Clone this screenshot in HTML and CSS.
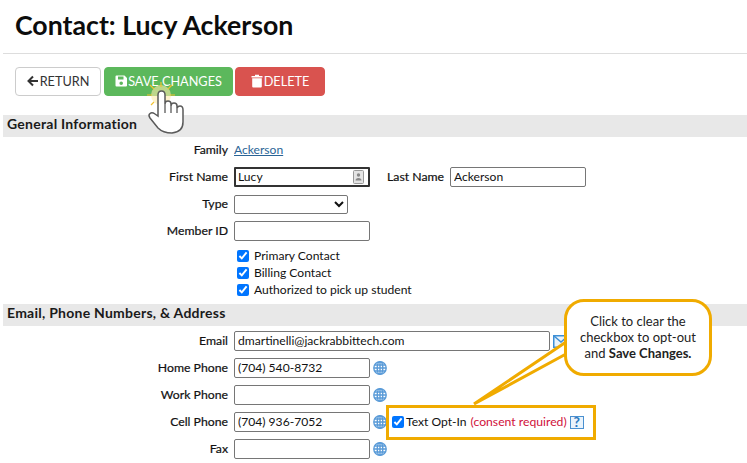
FILE: index.html
```html
<!DOCTYPE html>
<html lang="en">
<head>
<meta charset="utf-8">
<title>Contact: Lucy Ackerson</title>
<link rel="stylesheet" href="styles.css">
</head>
<body>
<div class="page">
  <h1 class="title">Contact: Lucy Ackerson</h1>
  <div class="actions">
    <button class="btn btn-return"><svg class="ico" viewBox="0 0 12 12"><path d="M11 6H2M6 1.5 1.5 6 6 10.5" fill="none" stroke="#333" stroke-width="2"/></svg>RETURN</button>
    <button class="btn btn-save"><svg class="ico" viewBox="0 0 12 12"><path fill-rule="evenodd" d="M1.5 0.500H9.500L12 3V10.500A1 1 0 0 1 11 11.500H1.500A1 1 0 0 1 .5 10.500V1.500A1 1 0 0 1 1.500 .5ZM3 1.500V4.500H8.500V1.500ZM6.200 6.500A1.800 1.800 0 1 0 6.200 10.100 1.800 1.800 0 1 0 6.200 6.500Z" fill="#fff"/></svg>SAVE CHANGES</button>
    <button class="btn btn-delete"><svg class="ico ico-trash" viewBox="0 0 12 14"><path d="M0.500 2H4V.8H8V2H11.500V3.400H.5ZM1.200 4.200H10.800V12.600A1 1 0 0 1 9.800 13.600H2.200A1 1 0 0 1 1.200 12.600Z" fill="#fff"/></svg>DELETE</button>
  </div>

  <h2 class="section">General Information</h2>
  <div class="rows">
    <div class="row"><span class="label">Family</span><a class="link" href="#">Ackerson</a></div>
    <div class="row">
      <span class="label">First Name</span>
      <span class="focus-wrap"><input class="field field-focus" value="Lucy"><svg class="contact-ico" viewBox="0 0 11 14"><rect x=".5" y=".5" width="10" height="13" rx="1" fill="#e4e4e4" stroke="#999"/><circle cx="5.500" cy="5" r="1.700" fill="#888"/><path d="M2.500 10.500a3 2.600 0 0 1 6 0Z" fill="#888"/></svg></span>
      <span class="label label-inline">Last Name</span>
      <input class="field" value="Ackerson">
    </div>
    <div class="row"><span class="label">Type</span><select class="field field-select"><option></option></select></div>
    <div class="row"><span class="label">Member ID</span><input class="field"></div>
    <div class="checks">
      <label class="check"><input type="checkbox" checked><span class="lift">Primary Contact</span></label>
      <label class="check"><input type="checkbox" checked><span class="lift">Billing Contact</span></label>
      <label class="check"><input type="checkbox" checked><span class="lift">Authorized to pick up student</span></label>
    </div>
  </div>

  <h2 class="section section-two">Email, Phone Numbers, &amp; Address</h2>
  <div class="rows rows-two">
    <div class="row"><span class="label">Email</span><input class="field field-wide" value="dmartinelli@jackrabbittech.com"><svg class="mail" viewBox="0 0 16 13"><rect x=".75" y=".75" width="14.500" height="11.500" fill="#eaf3fb" stroke="#3d8fd6" stroke-width="1.500"/><path d="M1 1 8 7l7-6" fill="none" stroke="#3d8fd6" stroke-width="1.500"/></svg></div>
    <div class="row"><span class="label">Home Phone</span><input class="field" value="(704) 540-8732"><svg class="globe" viewBox="0 0 14 14"><use href="#globe"/></svg></div>
    <div class="row"><span class="label">Work Phone</span><input class="field"><svg class="globe" viewBox="0 0 14 14"><use href="#globe"/></svg></div>
    <div class="row"><span class="label">Cell Phone</span><input class="field" value="(704) 936-7052"><svg class="globe" viewBox="0 0 14 14"><use href="#globe"/></svg>
      <span class="optin"><input type="checkbox" checked><span class="lift">Text Opt-In</span><span class="lift consent">(consent required)</span><span class="help">?</span></span>
    </div>
    <div class="row"><span class="label">Fax</span><input class="field"><svg class="globe" viewBox="0 0 14 14"><use href="#globe"/></svg></div>
  </div>

  <svg class="defs" width="0" height="0"><defs><g id="globe" fill="none" stroke="#5a9bd8" stroke-width="1.400"><circle cx="7" cy="7" r="6.200"/><ellipse cx="7" cy="7" rx="2.800" ry="6.200"/><path d="M7 1v12M1 7h12M1.900 4h10.200M1.900 10h10.200"/></g></defs></svg>

  <svg class="hand" viewBox="0 0 48 56" width="48" height="56">
    <circle cx="17" cy="15" r="10" fill="#fde9a8" opacity=".6"/>
    <g stroke="#f2c230" stroke-width="1.200"><path d="M17 2v5M6 5l4 4M28 5l-4 4M3 15h5M31 15h-5M7 25l3-3M27 25l-3-3"/></g>
    <path d="M14 36V15Q14 11 17.500 11Q21 11 21 15V24Q21 21 24 21Q27 21 27 24V26Q27 23 30 23Q33 23 33 26V28Q34 26 36 26Q39 26 39 30V42Q39 52 28 53Q19 53 14 48L6 38Q4 35 6 33.500Q8 32 11 34Z" fill="#fff" stroke="#5a5a5a" stroke-width="1.500"/>
    <path d="M21 24V33M27 26V33M33 28V33" fill="none" stroke="#5a5a5a" stroke-width="1.300"/>
  </svg>

  <svg class="tail" viewBox="0 0 100 70" width="100" height="70"><path d="M94 4 2 66 94 16" fill="#fff" stroke="#f0ab00" stroke-width="3"/></svg>
  <div class="callout"><p class="callout-text">Click to clear the<br>checkbox to opt-out<br>and <b>Save Changes.</b></p></div>
</div>
</body>
</html>
```
FILE: styles.css
```css
* { box-sizing: border-box; }
html, body { margin: 0; padding: 0; background: #fff; }
body { font-family: Lato, "Liberation Sans", sans-serif; font-size: 12.1px; color: #111; overflow: hidden; }
.page { position: relative; width: 747px; height: 463px; overflow: hidden; padding-left: 3px; }
.title { margin: 0; height: 54px; padding: 8px 0 0 12px; font-size: 26.7px; line-height: 34px; font-weight: 700; color: #0c0c0c; border-bottom: 1px solid #ddd; }
.actions { display: flex; gap: 2px; padding: 13px 0 0 12px; height: 61px; }
.btn { height: 29px; padding: 0 0 2px; border-radius: 4px; border: 1px solid #ccc; display: flex; align-items: center; justify-content: center; font: 400 12.7px Lato, sans-serif; gap: 1px; }
.btn-return { width: 86px; background: #fff; color: #333; margin-right: 1px; }
.btn-save { width: 129px; background: #5cb85c; border-color: #5cb85c; color: #fff; }
.btn-delete { width: 90px; background: #d9534f; border-color: #d9534f; color: #fff; }
.ico { width: 12px; height: 12px; }
.ico-trash { width: 12px; height: 14px; }
.section { margin: 0; height: 22px; background: #e8e8e8; padding-left: 4px; font-size: 14px; line-height: 18px; font-weight: 700; color: #1a1a1a; letter-spacing: .25px; }
.rows { display: flex; flex-direction: column; gap: 7px; padding-top: 3px; }
.rows-two { padding-top: 5px; }
.section-two { margin-top: 7px; }
.row { display: flex; align-items: center; height: 20px; }
.label { width: 225px; text-align: right; margin-right: 6px; padding-bottom: 2px; flex: none; font-size: 12.25px; font-weight: 400; -webkit-text-stroke: .2px #111; }
.label-inline { width: auto; margin: 0 6px 0 17px; }
.link { color: #2a6496; text-decoration: underline; padding-bottom: 2px; }
.lift { padding-bottom: 2px; }
.field { width: 136px; height: 20px; border: 1px solid #767676; border-radius: 2px; padding: 0 3px 2px; font: 400 12.1px Lato, sans-serif; color: #111; background: #fff; flex: none; }
.field-select { width: 114px; height: 19px; }
.field-wide { width: 316px; }
.focus-wrap { position: relative; display: block; width: 136px; height: 20px; flex: none; }
.field-focus { border: 2px solid #333; border-radius: 1px; padding: 0 2px 2px; }
.contact-ico { position: absolute; right: 6px; top: 3px; width: 11px; height: 14px; }
.checks { display: flex; flex-direction: column; gap: 3px; padding: 0 0 0 231px; margin-top: 1px; }
.check { display: flex; align-items: center; height: 14px; }
.check input { margin: 0 5px 0 3px; width: 12px; height: 12px; }
.mail { width: 16px; height: 13px; margin-left: 3px; flex: none; }
.globe { width: 14px; height: 14px; margin-left: 3px; flex: none; }
.optin { display: flex; align-items: center; margin-left: -1px; width: 210px; height: 35px; border: 3.5px solid #f0ab00; background: #fff; padding-left: 3px; flex: none; white-space: pre; }
.optin input { margin: 0 2px 0 0; width: 12px; height: 12px; }
.consent { color: #d0103a; margin-left: 4px; font-size: 12.2px; }
.help { margin-left: 3px; width: 14px; height: 13px; border: 1.5px solid #4a90d0; background: #eaf3fb; color: #2a78c0; font-weight: 700; font-size: 14px; line-height: 10px; text-align: center; }
.defs { position: absolute; }
.hand { position: absolute; left: 144px; top: 80px; }
.tail { position: absolute; left: 472px; top: 338px; }
.callout { position: absolute; left: 564px; top: 299px; width: 148px; height: 77px; border: 3px solid #f0ab00; border-radius: 20px; background: #fff; display: flex; align-items: center; justify-content: center; color: #222; }
.callout-text { margin: 0; padding-bottom: 2px; text-align: center; font-size: 13px; line-height: 16px; white-space: nowrap; }
```
